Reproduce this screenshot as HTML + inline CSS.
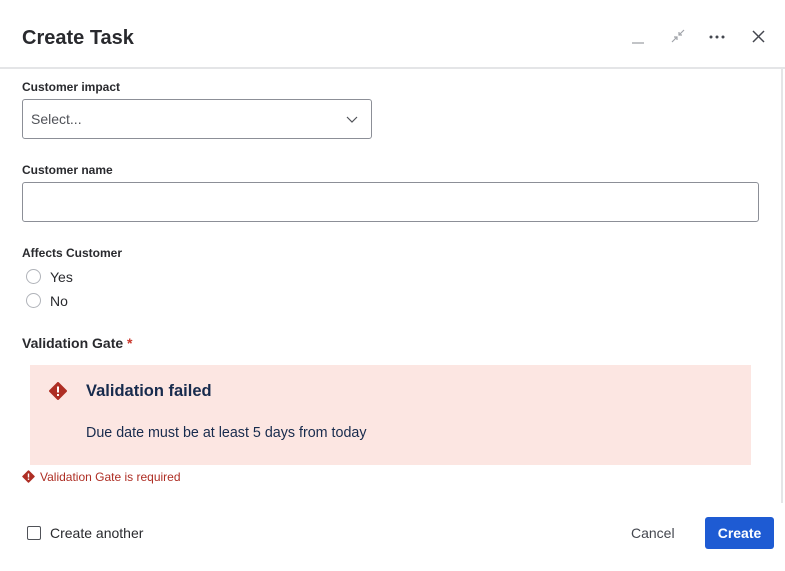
<!DOCTYPE html>
<html><head><style>
*{box-sizing:border-box;margin:0;padding:0}
body{width:785px;height:571px;background:#fff;font-family:"Liberation Sans",sans-serif;color:#172b4d;position:relative;overflow:hidden}
.a{position:absolute}
.lbl{font-size:12px;font-weight:bold;color:#292a2e}
.box{border:1px solid #8c8f97;border-radius:3px}
.t{font-size:14px;color:#292a2e}
.radio{width:15px;height:15px;border:1px solid #b0b3b9;border-radius:50%}
</style></head><body>
<div class="a" style="left:22px;top:27px;font-size:20px;font-weight:bold;color:#292a2e">Create Task</div>
<svg class="a" style="left:620px;top:24px" width="150" height="26">
<line x1="12" y1="19" x2="24" y2="19" stroke="#a0a3a9" stroke-width="1.3"/>
<g stroke="#a0a3a9" stroke-width="1.2" fill="none"><path d="M52 18 L57 13 M54 13 H57 V16"/><path d="M64 6 L59 11 M59 8 V11 H62"/></g>
<g fill="#44474f"><circle cx="91" cy="13" r="1.5"/><circle cx="97" cy="13" r="1.5"/><circle cx="103" cy="13" r="1.5"/></g>
<path d="M133 7 L144 18 M144 7 L133 18" stroke="#44474f" stroke-width="1.5"/>
</svg>
<div class="a" style="left:0;top:67px;width:785px;height:2px;background:#e4e5e7"></div>
<div class="a" style="left:781px;top:69px;width:2px;height:434px;background:#e4e5e7"></div>
<div class="a lbl" style="left:22px;top:80px">Customer impact</div>
<div class="a box" style="left:22px;top:99px;width:350px;height:40px"></div>
<div class="a t" style="left:31px;top:111px;color:#505258">Select...</div>
<svg class="a" style="left:346px;top:114px" width="12" height="10"><path d="M1 3 L6 8 L11 3" stroke="#505258" fill="none" stroke-width="1.2"/></svg>
<div class="a lbl" style="left:22px;top:163px">Customer name</div>
<div class="a box" style="left:22px;top:182px;width:737px;height:40px"></div>
<div class="a lbl" style="left:22px;top:246px">Affects Customer</div>
<div class="a radio" style="left:26px;top:269px"></div>
<div class="a t" style="left:50px;top:269px">Yes</div>
<div class="a radio" style="left:26px;top:293px"></div>
<div class="a t" style="left:50px;top:293px">No</div>
<div class="a" style="left:22px;top:335px;font-size:14px;font-weight:bold;color:#292a2e">Validation Gate <span style="color:#c9372c">*</span></div>
<div class="a" style="left:30px;top:365px;width:721px;height:100px;background:#fce6e2"></div>
<svg class="a" style="left:49px;top:382px" width="18" height="18"><path d="M9 1 L17 9 L9 17 L1 9 Z" fill="#ae2e24" stroke="#ae2e24" stroke-linejoin="round" stroke-width="2"/><rect x="8" y="4.5" width="2" height="6" fill="#fff"/><rect x="8" y="12" width="2" height="2" fill="#fff"/></svg>
<div class="a" style="left:86px;top:382px;font-size:16.5px;font-weight:bold;color:#172b4d">Validation failed</div>
<div class="a" style="left:86px;top:425px;font-size:14.3px;color:#172b4d">Due date must be at least 5 days from today</div>
<svg class="a" style="left:22px;top:470px" width="13" height="13"><path d="M6.5 1 L12 6.5 L6.5 12 L1 6.5 Z" fill="#ae2e24" stroke="#ae2e24" stroke-linejoin="round" stroke-width="1.5"/><rect x="5.8" y="3.5" width="1.4" height="4" fill="#fff"/><rect x="5.8" y="8.5" width="1.4" height="1.4" fill="#fff"/></svg>
<div class="a" style="left:40px;top:470px;font-size:12px;color:#ae2e24">Validation Gate is required</div>
<div class="a" style="left:27px;top:526px;width:14px;height:14px;border:1.5px solid #505258;border-radius:2px"></div>
<div class="a t" style="left:50px;top:525px">Create another</div>
<div class="a t" style="left:631px;top:525px;color:#44474f">Cancel</div>
<div class="a" style="left:705px;top:517px;width:69px;height:32px;background:#1e5bd3;border-radius:3px;color:#fff;font-size:14px;font-weight:bold;text-align:center;line-height:32px">Create</div>
</body></html>
